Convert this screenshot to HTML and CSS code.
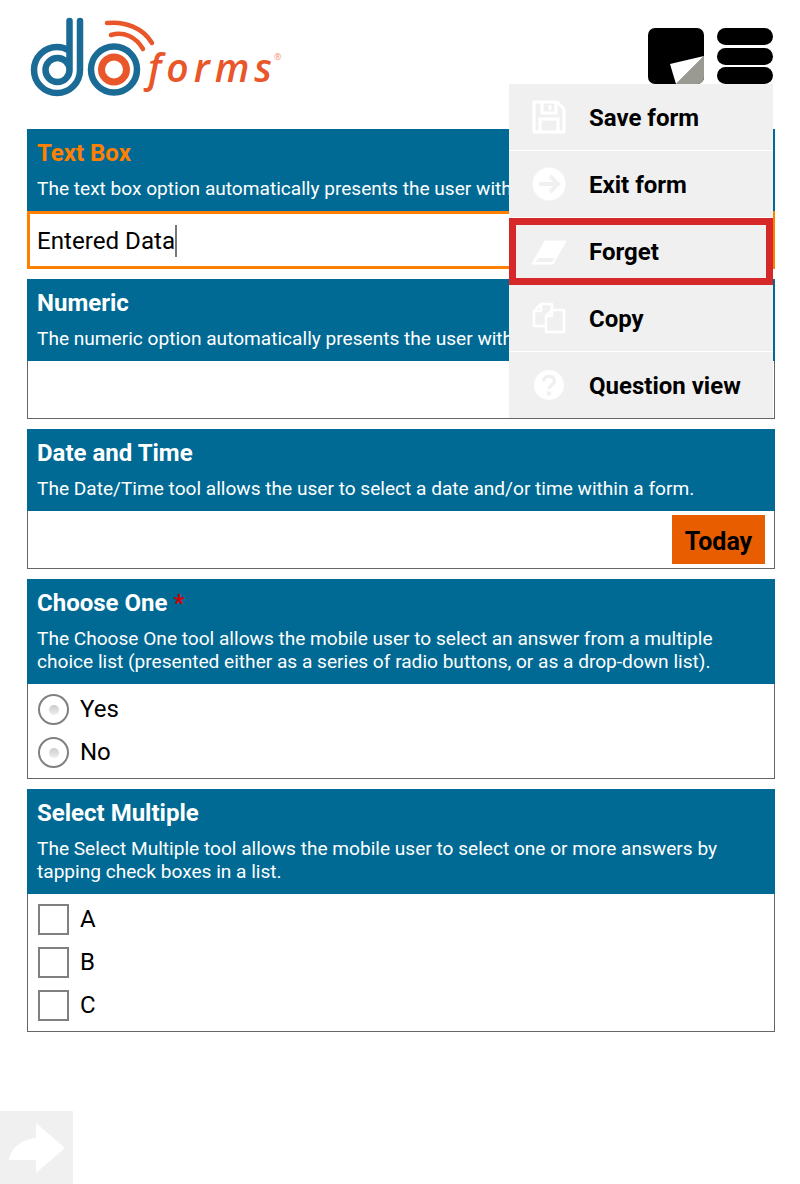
FILE: index.html
```html
<!DOCTYPE html>
<html lang="en">

<head>
    <meta charset="UTF-8">
    <title>doForms</title>
    <link rel="stylesheet" href="styles.css">
</head>

<body>
    <header class="top-bar">
        <svg class="logo" width="290" height="110" viewBox="0 0 290 110">
            <g fill="none" stroke="#1a6b96" stroke-width="6.500">
                <path d="M80 21V70A23 23 0 1 1 57 47C61 47 65 48 68 50" stroke-linecap="round" />
                <path d="M69.500 21V70A12 12 0 1 1 57.500 58A12 12 0 0 1 69.500 70" stroke-linecap="round" />
                <circle cx="114" cy="69.500" r="23" />
            </g>
            <circle cx="114" cy="69.500" r="12.500" fill="none" stroke="#e8562a" stroke-width="7" />
            <g fill="none" stroke="#e8562a" stroke-width="4.500" stroke-linecap="round">
                <path d="M107 23C125 21 143 28 152 43" />
                <path d="M111 35C124 31 136 37 143 49" />
            </g>
            <text class="logo-word" x="148" y="82">forms</text>
            <text class="logo-mark" x="274" y="60">®</text>
        </svg>
        <div class="top-icons">
            <svg class="note-icon" width="56" height="56" viewBox="0 0 56 56">
                <rect width="56" height="56" rx="7" fill="#000" />
                <path d="M28 56L56 28V49A7 7 0 0 1 49 56Z" fill="#9a9a92" />
                <path d="M22 36L56 28L28 56Z" fill="#fff" />
            </svg>
            <div class="menu-icon">
                <span></span>
                <span></span>
                <span></span>
            </div>
        </div>
    </header>

    <main class="form">
        <section class="card card-focus">
            <div class="card-head">
                <h2 class="title-active">Text Box</h2>
                <p>The text box option automatically presents the user with a keyboard for text entry.</p>
            </div>
            <div class="text-field">Entered Data<span class="caret"></span></div>
        </section>

        <section class="card">
            <div class="card-head">
                <h2>Numeric</h2>
                <p>The numeric option automatically presents the user with a numeric keypad.</p>
            </div>
            <div class="blank-field"></div>
        </section>

        <section class="card">
            <div class="card-head">
                <h2>Date and Time</h2>
                <p>The Date/Time tool allows the user to select a date and/or time within a form.</p>
            </div>
            <div class="blank-field date-field">
                <button class="today-btn">Today</button>
            </div>
        </section>

        <section class="card">
            <div class="card-head">
                <h2>Choose One <span class="required">*</span></h2>
                <p>The Choose One tool allows the mobile user to select an answer from a multiple choice list (presented either as a series of radio buttons, or as a drop-down list).</p>
            </div>
            <div class="options">
                <div class="option"><span class="radio"></span>Yes</div>
                <div class="option"><span class="radio"></span>No</div>
            </div>
        </section>

        <section class="card">
            <div class="card-head">
                <h2>Select Multiple</h2>
                <p>The Select Multiple tool allows the mobile user to select one or more answers by tapping check boxes in a list.</p>
            </div>
            <div class="options">
                <div class="option"><span class="checkbox"></span>A</div>
                <div class="option"><span class="checkbox"></span>B</div>
                <div class="option"><span class="checkbox"></span>C</div>
            </div>
        </section>
    </main>

    <!-- popup menu over the form -->
    <nav class="popup-menu">
        <div class="menu-item">
            <svg width="34" height="34" viewBox="0 0 34 34" fill="none" stroke="#fff" stroke-width="3">
                <path d="M2 2H25L32 9V32H2Z" stroke-linejoin="round" />
                <path d="M10 2V13H24V2" />
                <path d="M18 5V10" />
                <path d="M8 32V19H26V32" />
            </svg>
            <span class="menu-label">Save form</span>
        </div>
        <div class="menu-item">
            <svg width="34" height="34" viewBox="0 0 34 34">
                <circle cx="17" cy="17" r="16.500" fill="#fff" />
                <path d="M7 17H25M18 9L26 17L18 25" fill="none" stroke="#f0f0f0" stroke-width="4" />
            </svg>
            <span class="menu-label">Exit form</span>
        </div>
        <div class="menu-item menu-item-selected">
            <svg width="36" height="30" viewBox="0 0 36 30">
                <path d="M14 5H35L22 28H1Z" fill="#fff" stroke="#fff" stroke-linejoin="round" />
                <path d="M8 22H24L21 26H4Z" fill="#f0f0f0" />
            </svg>
            <span class="menu-label">Forget</span>
        </div>
        <div class="menu-item">
            <svg width="34" height="34" viewBox="0 0 34 34" fill="none" stroke="#fff" stroke-width="2.500" stroke-linejoin="round">
                <path d="M13 25H2V10L9 3H20V9" />
                <path d="M9 3V10H2" />
                <path d="M14 31V15L20 9H32V31Z" />
                <path d="M20 9V15H14" />
            </svg>
            <span class="menu-label">Copy</span>
        </div>
        <div class="menu-item">
            <svg width="32" height="32" viewBox="0 0 32 32">
                <circle cx="16" cy="16" r="15" fill="#fff" />
                <path d="M10.500 12.500C10.500 5.500 21.500 5.500 21.500 12C21.500 16 16 16 16 20" fill="none" stroke="#f0f0f0" stroke-width="3.500" />
                <rect x="14" y="22.500" width="4" height="4" fill="#f0f0f0" />
            </svg>
            <span class="menu-label">Question view</span>
        </div>
    </nav>

    <div class="next-btn">
        <svg width="56" height="50" viewBox="0 0 56 50">
            <path d="M27 0L56 25L27 50V37H0C2 24 14 16 27 15Z" fill="#fff" />
        </svg>
    </div>
</body>

</html>
```
FILE: styles.css
```css
html,
body {
    margin: 0;
    padding: 0;
    height: 1184px;
    overflow: hidden;
    background-color: #fff;
    font-family: Roboto, "Liberation Sans", sans-serif;
    color: #000;
}

.top-bar {
    height: 129px;
    display: flex;
    justify-content: space-between;
}

.logo-word {
    font-family: "Open Sans", sans-serif;
    font-style: italic;
    font-weight: 600;
    font-size: 39px;
    letter-spacing: 5px;
    fill: #e8562a;
}

.logo-mark {
    font-family: "Open Sans", sans-serif;
    font-size: 9px;
    fill: #ef9478;
}

.top-icons {
    display: flex;
    gap: 13px;
    padding: 28px 27px 0 0;
}

.note-icon {
    display: block;
}

.menu-icon {
    width: 56px;
    height: 56px;
    display: flex;
    flex-direction: column;
    justify-content: space-between;
}

.menu-icon span {
    height: 17px;
    border-radius: 9px;
    background-color: #000;
}

.form {
    display: flex;
    flex-direction: column;
    gap: 10px;
    padding: 0 25px 0 27px;
}

.card {
    border: 1px solid #666;
}

.card-focus {
    border-bottom: 0;
}

.card-head {
    margin: -1px -1px 0;
    padding: 9px 10px 11px;
    background-color: #006a94;
    color: #fff;
}

.card-head h2 {
    margin: 0 0 9px;
    font-size: 24px;
    line-height: 30px;
    font-weight: 700;
}

.card-head .title-active {
    color: #ff8000;
}

.card-head p {
    margin: 0;
    font-size: 19.100px;
    line-height: 23px;
}

.required {
    color: #d60000;
}

.text-field {
    height: 51px;
    margin: 0 -1px;
    padding: 1px 7px 0;
    border: 3px solid #ff8000;
    background-color: #fff;
    display: flex;
    align-items: center;
    font-size: 24.150px;
}

.caret {
    width: 2px;
    height: 32px;
    background-color: #777;
}

.blank-field {
    height: 57px;
}

.date-field {
    display: flex;
    justify-content: flex-end;
    align-items: center;
    padding-right: 9px;
}

.today-btn {
    width: 93px;
    height: 49px;
    border: 0;
    padding: 3px 0 0;
    background-color: #e85d00;
    color: #000;
    font-family: inherit;
    font-size: 25px;
    font-weight: 700;
}

.options {
    padding: 3px 10px 5px;
}

.option {
    height: 43px;
    display: flex;
    align-items: center;
    gap: 11px;
    font-size: 24px;
}

.radio {
    box-sizing: border-box;
    width: 31px;
    height: 31px;
    margin-top: 2px;
    border: 2px solid #808080;
    border-radius: 50%;
    display: flex;
    align-items: center;
    justify-content: center;
}

.radio::after {
    content: "";
    width: 10px;
    height: 10px;
    border-radius: 50%;
    background: linear-gradient(#ccc, #eee);
}

.checkbox {
    box-sizing: border-box;
    width: 31px;
    height: 31px;
    margin-top: 2px;
    border: 2px solid #808080;
}

.popup-menu {
    position: absolute;
    left: 509px;
    top: 84px;
    width: 264px;
    height: 334px;
    display: flex;
    flex-direction: column;
    background-color: #f0f0f0;
}

.menu-item {
    box-sizing: border-box;
    flex: 1;
    display: flex;
    align-items: center;
    padding-left: 80px;
    position: relative;
    border-bottom: 1px solid #fff;
    font-size: 24px;
    font-weight: 700;
}

.menu-label {
    padding-top: 2px;
}

.menu-item:last-child {
    border-bottom: 0;
}

.menu-item svg {
    position: absolute;
    left: 40px;
    top: 50%;
    transform: translate(-50%, -50%);
}

.menu-item-selected {
    outline: 7px solid #d62828;
    outline-offset: -7px;
}

.next-btn {
    position: absolute;
    left: 0;
    top: 1111px;
    width: 73px;
    height: 73px;
    background-color: #f0f0f0;
    display: flex;
    align-items: center;
    justify-content: center;
}
```
